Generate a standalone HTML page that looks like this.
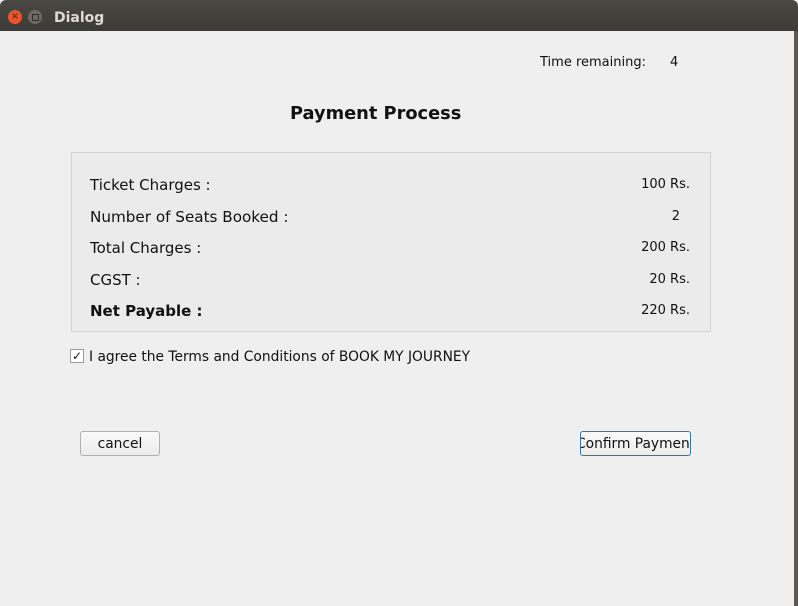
<!DOCTYPE html>
<html><head><style>
body{margin:0;width:798px;height:606px;overflow:hidden;background:#efefef;font-family:"DejaVu Sans","Liberation Sans",sans-serif;position:relative;color:#111}
.t{position:absolute;white-space:nowrap}
#bar{position:absolute;left:0;top:0;width:798px;height:31px;background:linear-gradient(#4a4843,#3c3b37);border-radius:6px 6px 0 0}
</style></head><body>
<div id="bar"></div>
<div style="position:absolute;left:8px;top:10px;width:14px;height:14px;border-radius:50%;background:#e9552c;color:#5a1a08;font-size:10px;line-height:14px;text-align:center">×</div>
<div style="position:absolute;left:28px;top:10px;width:14px;height:14px;border-radius:50%;background:#6b6a65"><div style="position:absolute;left:4px;top:4px;width:5px;height:5px;border:1px solid #2e2d2a"></div></div>
<div class="t" style="left:54px;top:10px;color:#dfdbd2;font-weight:bold;font-size:14px">Dialog</div>
<div style="position:absolute;left:794px;top:31px;width:4px;height:575px;background:#5a5955"></div>
<div class="t" style="left:540px;top:55px;font-size:13px">Time remaining:</div>
<div class="t" style="left:670px;top:55px;font-size:13px">4</div>
<div class="t" style="left:290px;top:103px;font-size:17.8px;font-weight:bold">Payment Process</div>
<div style="position:absolute;left:71px;top:152px;width:638px;height:178px;border:1px solid #d3d3d3;background:#ebebeb"></div>
<div class="t" style="left:90px;top:176px;font-size:15px">Ticket Charges :</div>
<div class="t" style="left:90px;top:208px;font-size:15.2px">Number of Seats Booked :</div>
<div class="t" style="left:90px;top:239px;font-size:15px">Total Charges :</div>
<div class="t" style="left:90px;top:271px;font-size:15px">CGST :</div>
<div class="t" style="left:90px;top:302px;font-size:15px;font-weight:bold">Net Payable :</div>
<div class="t" style="right:108px;top:177px;font-size:13px">100 Rs.</div>
<div class="t" style="right:118px;top:209px;font-size:13px">2</div>
<div class="t" style="right:108px;top:240px;font-size:13px">200 Rs.</div>
<div class="t" style="right:108px;top:272px;font-size:13px">20 Rs.</div>
<div class="t" style="right:108px;top:303px;font-size:13px">220 Rs.</div>
<div style="position:absolute;left:70px;top:349px;width:12px;height:12px;border:1px solid #999;background:#fff;font-size:12px;line-height:12px;text-align:center;font-weight:bold">✓</div>
<div class="t" style="left:89px;top:349px;font-size:13.8px">I agree the Terms and Conditions of BOOK MY JOURNEY</div>
<div style="position:absolute;left:80px;top:431px;width:78px;height:23px;border:1px solid #b0b0b0;border-radius:3px;background:linear-gradient(#fafafa,#ececec);font-size:13.8px;text-align:center;line-height:25px">cancel</div>
<div style="position:absolute;left:580px;top:431px;width:109px;height:23px;border:1px solid #3a73a8;border-radius:3px;background:linear-gradient(#fafafa,#ececec);font-size:13.8px;line-height:25px;overflow:hidden;white-space:nowrap"><span style="position:relative;left:-5px">Confirm Payment</span></div>
</body></html>
